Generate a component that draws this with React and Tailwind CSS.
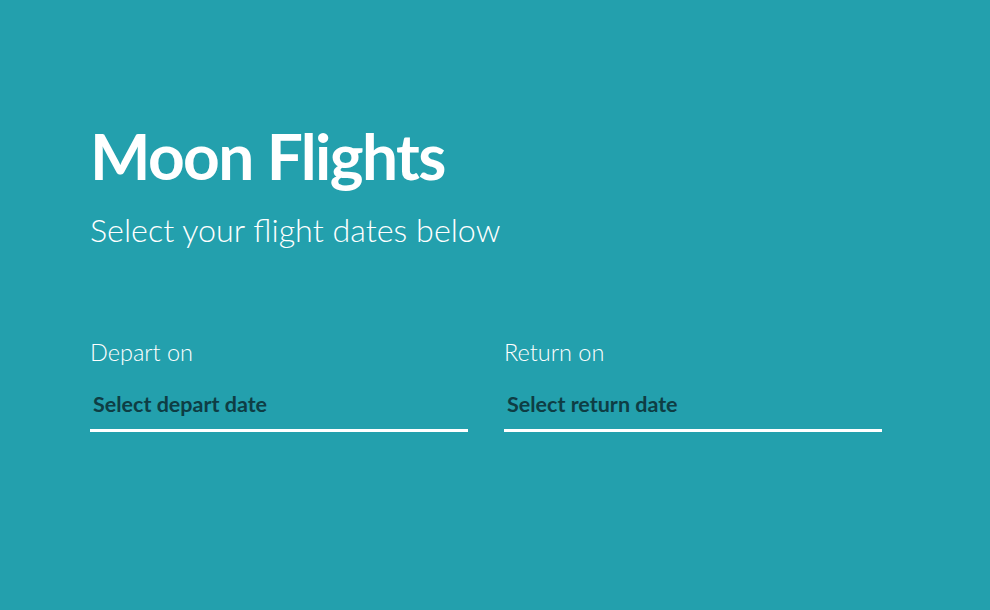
export default function App() {
  return (
    <div className="min-h-[610px] w-full bg-[#23a0ad] text-white">
      <div className="pl-[90px] pt-[118px] font-['Lato',sans-serif]">
        <h1 className="text-[64px] font-bold leading-[76px] tracking-[-1.6px]">Moon Flights</h1>
        <p className="mt-[16px] text-[32.3px] font-light leading-[40px]">Select your flight dates below</p>
        <div className="mt-[88px] flex gap-[36px]">
          <div className="w-[378px]">
            <div className="text-[23.5px] font-light leading-[28px]">Depart on</div>
            <div className="mt-[25px] border-b-[3px] border-white pb-[12px] pl-[3px] text-[21.5px] font-bold leading-[26px] text-[#0e3d44]">Select depart date</div>
          </div>
          <div className="w-[378px]">
            <div className="text-[23.5px] font-light leading-[28px]">Return on</div>
            <div className="mt-[25px] border-b-[3px] border-white pb-[12px] pl-[3px] text-[21.5px] font-bold leading-[26px] text-[#0e3d44]">Select return date</div>
          </div>
        </div>
      </div>
    </div>
  );
}
